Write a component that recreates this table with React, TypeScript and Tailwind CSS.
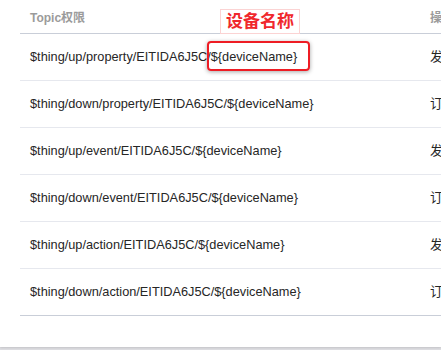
import React from "react";

const topics = [
  { topic: "$thing/up/property/EITIDA6J5C/${deviceName}", op: "发" },
  { topic: "$thing/down/property/EITIDA6J5C/${deviceName}", op: "订" },
  { topic: "$thing/up/event/EITIDA6J5C/${deviceName}", op: "发" },
  { topic: "$thing/down/event/EITIDA6J5C/${deviceName}", op: "订" },
  { topic: "$thing/up/action/EITIDA6J5C/${deviceName}", op: "发" },
  { topic: "$thing/down/action/EITIDA6J5C/${deviceName}", op: "订" },
];

const font = {
  fontFamily: '"Liberation Sans", Arial, "Noto Sans CJK SC", sans-serif',
};

export default function App() {
  return (
    <div className="w-[441px] h-[350px] overflow-hidden bg-[#dedee2]" style={font}>
      <div className="relative h-[347px] bg-white pl-5 shadow-[0_1px_2px_rgba(0,0,0,0.12)]">
        {/* header */}
        <div className="flex h-[34px] items-start border-b border-[#c9ced8] pt-[9px] text-[12px] font-bold text-[#9b9b9b]">
          <div className="w-[400px] shrink-0 pl-[10px]">Topic权限</div>
          <div className="whitespace-nowrap pl-[10px]">操作权限</div>
        </div>
        {topics.map((t, i) => (
          <div
            key={t.topic}
            className={
              i === topics.length - 1
                ? "flex h-[47px] items-center border-b border-[#c9ced8] text-[12.75px] text-[#262626]"
                : "flex h-[47px] items-center border-b border-[#e6e8ee] text-[12.75px] text-[#262626]"
            }
          >
            <div className="w-[400px] shrink-0 whitespace-nowrap pl-[10px]">{t.topic}</div>
            <div className="whitespace-nowrap pl-[10px]">{t.op}布</div>
          </div>
        ))}

        {/* callout label */}
        <div className="absolute left-[220px] top-[9px] flex h-[25px] w-[80px] items-center justify-center border border-[#fbd3d3] bg-white text-[17px] font-bold leading-none text-[#f0282d]">
          设备名称
        </div>
        {/* highlight box */}
        <div className="absolute left-[207px] top-[41px] h-[30px] w-[103px] rounded-[4px] border-2 border-[#ee1c24] shadow-[0_1px_4px_rgba(0,0,0,0.35)]" />
      </div>
    </div>
  );
}
